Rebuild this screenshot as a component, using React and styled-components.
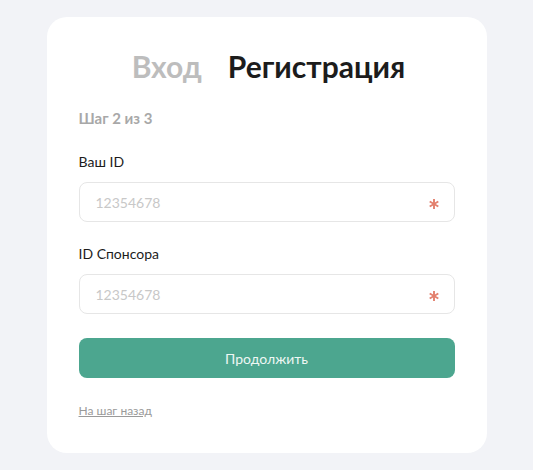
import React from "react";
import styled, { createGlobalStyle } from "styled-components";

const Global = createGlobalStyle`
  html, body { margin: 0; padding: 0; background: #f2f3f7; }
  body { font-family: Lato, "Noto Sans", sans-serif; }
  * { box-sizing: border-box; }
`;

const Page = styled.div`
  display: flex;
  justify-content: center;
  padding-top: 17px;
  min-height: 470px;
`;

const Card = styled.div`
  width: 440px;
  height: 436px;
  background: #fff;
  border-radius: 20px;
  padding: 31px 32px 0 32px;
  display: flex;
  flex-direction: column;
`;

const Tabs = styled.div`
  display: flex;
  justify-content: center;
  gap: 26px;
  margin-left: 4px;
`;

const Tab = styled.span`
  font-size: 30px;
  font-weight: 700;
  line-height: 36px;
  color: ${(p) => (p.$active ? "#1c1c1c" : "#bdbdbd")};
`;

const Step = styled.div`
  margin-top: 25px;
  font-size: 15px;
  font-weight: 700;
  color: #a8a8a8;
  line-height: 18px;
`;

const Field = styled.div`
  display: flex;
  flex-direction: column;
`;

const Label = styled.label`
  font-size: 14px;
  color: #1c1c1c;
  line-height: 18px;
  margin-top: ${(p) => p.$mt}px;
`;

const InputBox = styled.div`
  margin-top: 11px;
  height: 40px;
  border: 1px solid #e6e6e6;
  border-radius: 8px;
  display: flex;
  align-items: center;
  padding: 0 15px 0 16px;
`;

const Input = styled.input`
  flex: 1;
  border: none;
  outline: none;
  font-family: Lato, "Noto Sans", sans-serif;
  font-size: 14px;
  color: #1c1c1c;
  padding: 0;
  &::placeholder { color: #c8c8c8; }
`;

const StarIcon = styled.svg`
  width: 10px;
  height: 10px;
  margin-top: 3px;
  flex-shrink: 0;
`;

const Star = () => (
  <StarIcon viewBox="0 0 10 10">
    <g stroke="#e3806e" strokeWidth="1.9" strokeLinecap="butt">
      <line x1="5" y1="0" x2="5" y2="10" />
      <line x1="0.7" y1="2.5" x2="9.3" y2="7.5" />
      <line x1="0.7" y1="7.5" x2="9.3" y2="2.5" />
    </g>
  </StarIcon>
);

const Button = styled.button`
  margin-top: 24px;
  height: 40px;
  border: none;
  border-radius: 8px;
  background: #4ca68f;
  color: #eef7f4;
  font-family: Lato, "Noto Sans", sans-serif;
  font-size: 14px;
`;

const Back = styled.a`
  margin-top: 25px;
  font-size: 12px;
  color: #9a9a9a;
  text-decoration: underline;
  line-height: 15px;
  align-self: flex-start;
`;

export default function App() {
  return (
    <>
      <Global />
      <Page>
        <Card>
          <Tabs>
            <Tab>Вход</Tab>
            <Tab $active>Регистрация</Tab>
          </Tabs>
          <Step>Шаг 2 из 3</Step>
          <Field>
            <Label $mt={26}>Ваш ID</Label>
            <InputBox>
              <Input placeholder="12354678" />
              <Star />
            </InputBox>
          </Field>
          <Field>
            <Label $mt={23}>ID Спонсора</Label>
            <InputBox>
              <Input placeholder="12354678" />
              <Star />
            </InputBox>
          </Field>
          <Button>Продолжить</Button>
          <Back href="#">На шаг назад</Back>
        </Card>
      </Page>
    </>
  );
}
